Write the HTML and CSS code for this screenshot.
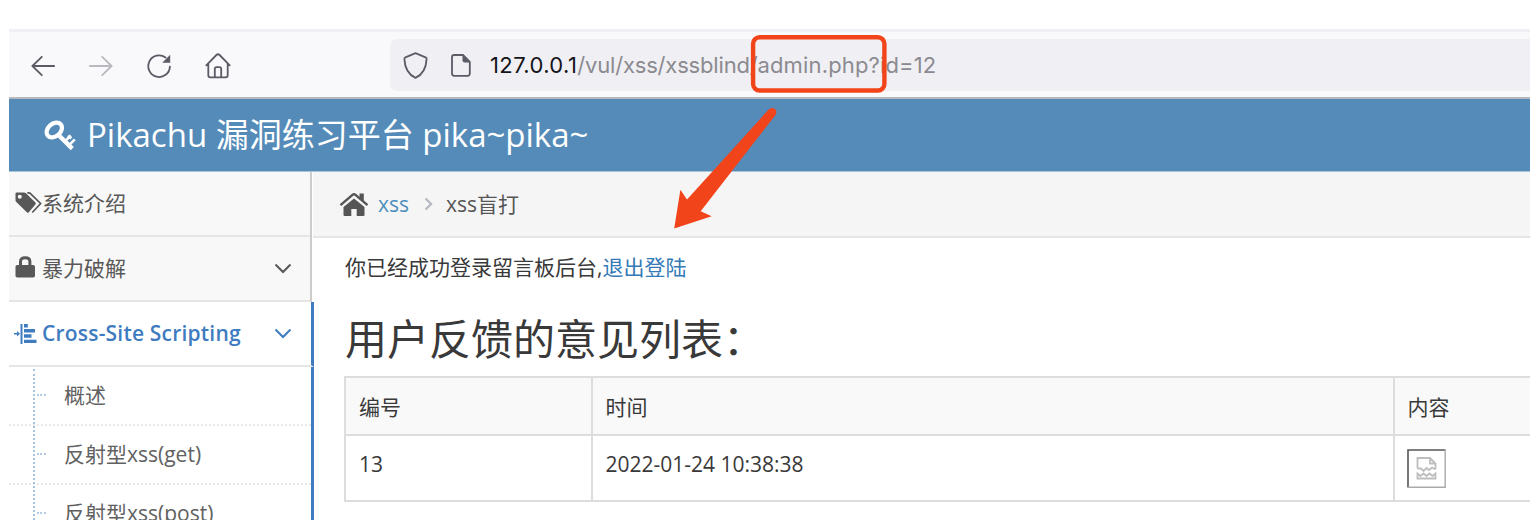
FILE: index.html
```html
<!DOCTYPE html>
<html lang="zh-CN">
<head>
<meta charset="utf-8">
<title>Pikachu 漏洞练习平台 pika~pika~</title>
<link rel="stylesheet" href="styles.css">
</head>
<body>
<div class="window">
  <div class="toolbar">
    <nav class="nav-buttons">
      <svg width="24" height="22" viewBox="0 0 24 22" class="stroke"><path d="M23.2 11H1.5M10.8 1.8 1.4 11l9.4 9.2"/></svg>
      <svg width="24" height="22" viewBox="0 0 24 22" class="stroke faded"><path d="M.8 11h21.7M13.2 1.8 22.6 11l-9.4 9.2"/></svg>
      <svg width="24" height="24" viewBox="0 0 24 24" class="stroke"><path d="M18.5 3.5A10.8 10.8 0 1 0 22.9 12.6"/><path d="M23.2.8v8h-8z" fill="#5b5b66" stroke="none"/></svg>
      <svg width="26" height="26" viewBox="0 0 26 26" class="stroke"><path d="M1.3 12.3 11.4 2Q13 .4 14.6 2l10.1 10.3M3.3 10.5v11.8q0 2 2 2h15.4q2 0 2-2V10.5M9.8 24.3V16q0-1.8 1.8-1.8h2.8q1.8 0 1.8 1.8v8.3"/></svg>
    </nav>
    <div class="address">
      <svg width="25" height="27" viewBox="0 0 25 27" class="stroke"><path d="M12.5 1.2 22.6 5.3q1.2.5 1 1.8C23.2 16 19.4 22.6 12.5 25.9 5.6 22.6 1.8 16 1.4 7.1q-.1-1.3 1-1.8z"/></svg>
      <svg width="20" height="23" viewBox="0 0 20 23" class="stroke file"><path d="M12 1H3.2Q1 1 1 3.2v16.4Q1 21.8 3.2 21.8h13.4q2.2 0 2.2-2.2V8z"/><path d="M11.5.6v6q0 1.8 1.8 1.8h6z" fill="#5b5b66" stroke="none"/></svg>
      <span class="url"><span class="host">127.0.0.1</span><span class="path">/vul/xss/xssblind/</span><span class="path page">admin.php?id=12</span></span>
    </div>
  </div>

  <header class="header">
    <svg width="32" height="31" viewBox="0 0 32 31"><g fill="none" stroke="#fff"><ellipse cx="10.3" cy="10" rx="8.600" ry="6.300" stroke-width="4.200" transform="rotate(-42 10.300 10)"/><path d="m13.500 14 14.800 14.600" stroke-width="4.400"/><path d="m20.800 21.500 6-6M24.800 25.300l6-6M24.200 15.500l3 3" stroke-width="2.600"/></g></svg>
    <span class="brand">Pikachu 漏洞练习平台 pika~pika~</span>
  </header>

  <div class="columns">
    <aside class="sidebar">
      <div class="item">
        <svg class="tags" width="28" height="22" viewBox="0 0 28 22" fill="#585858"><path fill-rule="evenodd" d="M1.500.5h7.700q1 0 1.800.8l9.400 9.200q1 1 0 2l-6.600 7.700q-1 1-2 0L1.300 10Q.5 9.200.5 8.200V1.500q0-1 1-1zM4.800 2.700a2 2 0 1 0 0 4 2 2 0 0 0 0-4z"/><path d="M12.300.8h1.500q.8 0 1.400.6L25.600 11.500 17.300 20.500" fill="none" stroke="#585858" stroke-width="1.700"/></svg>
        <span>系统介绍</span>
      </div>
      <div class="item">
        <svg class="lock" width="28" height="22" viewBox="0 0 28 22"><path d="M5.500 10V5.500q0-3.800 4.700-3.800t4.700 3.800V10" fill="none" stroke="#585858" stroke-width="3"/><rect x=".5" y="9" width="19.500" height="12.500" rx="1.800" fill="#585858"/></svg>
        <span>暴力破解</span>
        <svg class="chevron" width="18" height="11" viewBox="0 0 18 11"><path d="m1.500 1.500 7.500 7.500 7.500-7.500"/></svg>
      </div>
      <div class="item active">
        <svg width="28" height="22" viewBox="0 0 28 22" fill="#3e7cbf"><path d="M6.500 1h2v20h-2zM0 10h3V8l3 2.800L3 13.500v-2H0zM10 1h3.800v3.500H10zM10 6h11v3.500H10zM10 11.300h7.500v3.500H10zM10 16.700h12.500V20H10z"/></svg>
        <span>Cross-Site Scripting</span>
        <svg class="chevron" width="18" height="11" viewBox="0 0 18 11"><path d="m1.500 1.500 7.500 7.500 7.500-7.500"/></svg>
      </div>
      <ul class="submenu">
        <li><i class="tick"></i>概述</li>
        <li><i class="tick"></i>反射型xss(get)</li>
        <li><i class="tick"></i>反射型xss(post)</li>
      </ul>
    </aside>

    <main class="main">
      <div class="breadcrumb">
        <svg width="30" height="25" viewBox="0 0 30 25" fill="#555"><path d="M15 6.500 25.500 15v8q0 1-1 1h-6.800v-7h-5.400v7H5.500q-1 0-1-1v-8z"/><path d="m1.500 13.200 12-10.300q1.500-1.300 3 0l12 10.300" fill="none" stroke="#555" stroke-width="2.400"/><path d="M20.500 1.500h4.300v9l-4.300-3.800z"/></svg>
        <a class="crumb">xss</a>
        <svg width="9" height="14" viewBox="0 0 9 14"><path d="m1.500 1.500 5.700 5.500-5.700 5.500" fill="none" stroke="#b2b6bf" stroke-width="2"/></svg>
        <span>xss盲打</span>
      </div>
      <section class="content">
        <p class="notice">你已经成功登录留言板后台,<a>退出登陆</a></p>
        <h2 class="title">用户反馈的意见列表：</h2>
        <table class="feedback">
          <tr class="head"><td class="c-id">编号</td><td class="c-time">时间</td><td>内容</td></tr>
          <tr class="row"><td>13</td><td>2022-01-24 10:38:38</td><td>
            <svg class="broken" width="39" height="39" viewBox="0 0 39 39" fill="none"><path d="M1 38.500V1h37.500" stroke="#555" stroke-width="1.600"/><path d="M38.200 1v37.200H1" stroke="#aaa" stroke-width="1.400"/><path d="M10.500 19.500V9h12.500l5.500 5.500v5.500M23 9v5.500h5.500M10.500 19.500l3.500 0 2.500 2.500 3-3 2.500 2 3-2.500 3.500 2M10.500 24.500v5h18v-5l-3 2.500-3-2.500-3 2.500-3-2.500-3 2.500z" stroke="#bdbdbd" stroke-width="1.800"/></svg>
          </td></tr>
        </table>
      </section>
    </main>
  </div>

  <svg class="annotation" width="1530" height="520" viewBox="0 0 1530 520">
    <rect x="753.100" y="37.200" width="131.300" height="53.300" rx="6.500" fill="none" stroke="#f2441a" stroke-width="4.400"/>
    <path d="M768.600 109.600Q772.500 106.500 775.500 109.500 777.500 112 775.300 115.200L700.700 211.300 711.700 216.200 674.200 228.500 680.400 189.800 687 199.500z" fill="#f2441a"/>
  </svg>
</div>
</body>
</html>
```
FILE: styles.css
```css
* { box-sizing: border-box; }
body {
  margin: 0;
  background: #fff;
  color: #393939;
  font: 21px/30px "Open Sans", "Noto Sans CJK SC", sans-serif;
}
svg { display: block; flex: none; }
.window {
  position: relative;
  width: 1530px;
  height: 520px;
  padding: 29px 0 0 9px;
  overflow: hidden;
}
.stroke {
  fill: none;
  stroke: #5b5b66;
  stroke-width: 1.8;
  stroke-linecap: round;
  stroke-linejoin: round;
}
.faded { opacity: .4; }

.toolbar {
  display: flex;
  align-items: center;
  height: 70px;
  padding-top: 2px;
  border-top: 3px solid #f0f0f4;
  border-bottom: 2px solid #b5b8be;
  background: #f9f9fb;
}
.nav-buttons {
  display: flex;
  align-items: center;
  gap: 34px;
  width: 381px;
  padding-left: 22px;
}
.address {
  display: flex;
  flex: 1;
  align-items: center;
  align-self: flex-start;
  height: 52px;
  margin-top: 5px;
  padding-left: 13px;
  border-radius: 7px 0 0 7px;
  background: #f0f0f4;
}
.file { margin-left: 23px; }
.url {
  margin-left: 19px;
  font: 22px/30px Inter, sans-serif;
  white-space: nowrap;
}
.host { color: #15141a; letter-spacing: .4px; }
.path { color: #8b8a90; letter-spacing: -.18px; }
.page { letter-spacing: .15px; }

.header {
  display: flex;
  align-items: center;
  height: 73px;
  padding-left: 35px;
  border-bottom: 1px solid #a9c5dc;
  background: #548bb8;
  color: #fff;
}
.brand {
  margin: -1px 0 0 11px;
  font-size: 33px;
  line-height: 50px;
  white-space: nowrap;
}

.columns { display: flex; height: 360px; }
.sidebar {
  flex: none;
  width: 304px;
  background: linear-gradient(to right, transparent 301px, #ccc 301px, #ccc 303px, transparent 303px);
}
.item {
  display: flex;
  align-items: center;
  width: 301px;
  height: 65px;
  padding: 0 18px 0 6px;
  border-bottom: 2px solid #e5e5e5;
  background: #f8f8f8;
  color: #585858;
  white-space: nowrap;
}
.item span { margin: -1px 0 0 -1px; }
.tags { margin-top: -2px; }
.lock { margin-top: -3px; }
.chevron { margin-left: auto; fill: none; stroke: #585858; stroke-width: 2; }
.item.active {
  width: 305px;
  padding-right: 19px;
  padding-left: 5px;
  border-right: 3px solid #3e7cbf;
  background: #fff;
  color: #3e7cbf;
  font-weight: 600;
}
.item.active span { margin-left: 0; letter-spacing: .2px; }
.active .chevron { stroke: #3e7cbf; }
.submenu {
  position: relative;
  width: 305px;
  margin: 0;
  padding: 0;
  border-right: 3px solid #3e7cbf;
  background: #fff;
  color: #616161;
  list-style: none;
}
.submenu::before {
  position: absolute;
  top: 2px;
  bottom: 0;
  left: 24px;
  border-left: 2px dotted #a5c4e2;
  content: "";
}
.submenu li {
  display: flex;
  align-items: center;
  height: 59px;
  padding-bottom: 1px;
  border-bottom: 2px dotted #e8e8e8;
  white-space: nowrap;
}
.tick {
  width: 9px;
  margin: 0 18px 0 28px;
  border-top: 2px dotted #b5cbe2;
}

.main { flex: 1; min-width: 0; }
.breadcrumb {
  display: flex;
  align-items: center;
  height: 66px;
  padding-left: 26px;
  border-bottom: 2px solid #e5e5e5;
  background: #f5f5f5;
  color: #555;
}
.crumb { margin: 0 15px 0 9px; color: #4c8fbd; }
.breadcrumb span { margin-left: 13px; }
.content { padding: 14px 0 0 32px; }
.notice { margin: 0; white-space: nowrap; }
.notice a { color: #337ab7; }
.title {
  margin: 27px 0 0;
  font-size: 42px;
  font-weight: 400;
  line-height: 60px;
  white-space: nowrap;
}
.feedback {
  width: 1300px;
  margin: 7px 0 0 -1px;
  border-collapse: collapse;
  table-layout: fixed;
}
.feedback td {
  padding: 0 13px;
  border: 2px solid #ddd;
  vertical-align: top;
}
.c-id { width: 246.500px; }
.c-time { width: 802px; }
.head { height: 58px; background: #f9f9f9; }
.head td { padding-top: 14px; }
.row { height: 66px; }
.row td { padding-top: 13px; }
.broken { margin-left: -1px; }

.annotation { position: absolute; top: 0; left: 0; }
```
